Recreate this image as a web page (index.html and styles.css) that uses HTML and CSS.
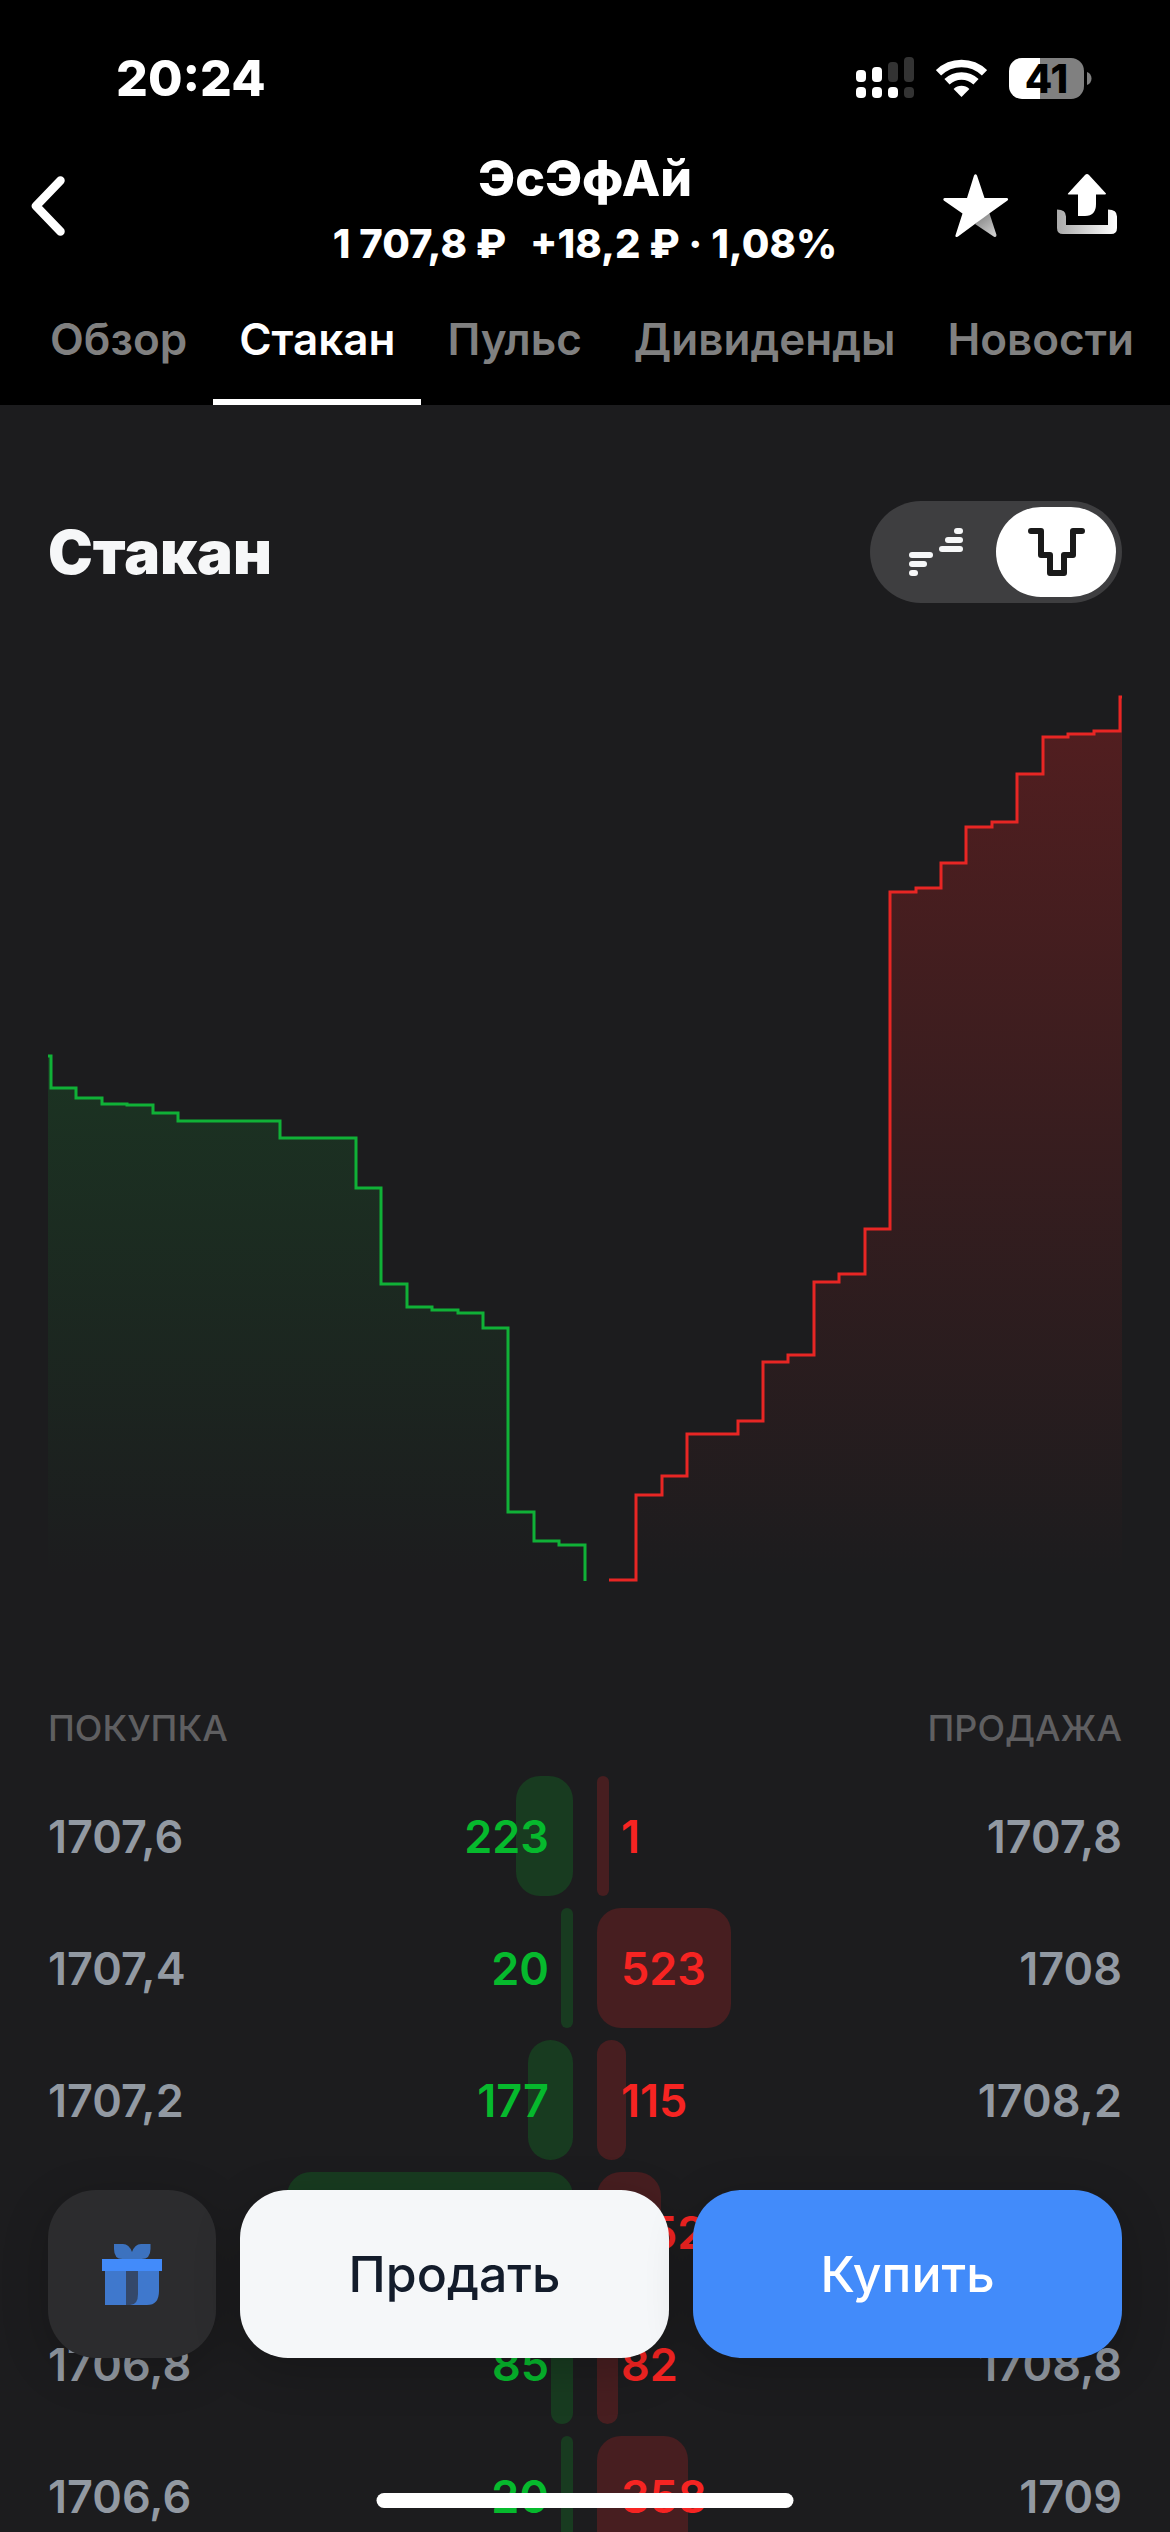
FILE: index.html
```html
<!DOCTYPE html>
<html lang="ru">
<head>
<meta charset="UTF-8">
<meta name="viewport" content="width=device-width, initial-scale=1.0">
<title>ЭсЭфАй — Стакан</title>
<link rel="stylesheet" href="styles.css">
</head>
<body>
<div class="app">
  <header class="header">
    <div class="status-bar">
      <span class="time">20:24</span>
      <div class="status-icons">
        <svg class="signal" width="58" height="42" viewBox="0 0 58 42" aria-hidden="true">
          <g fill="#fff">
            <rect x="0" y="13" width="10" height="12" rx="4"/>
            <rect x="16" y="10" width="10" height="15" rx="4"/>
            <rect x="0" y="30" width="10" height="11" rx="4"/>
            <rect x="16" y="30" width="10" height="11" rx="4"/>
            <rect x="32" y="30" width="10" height="11" rx="4"/>
          </g>
          <g fill="#333">
            <rect x="32" y="5" width="10" height="20" rx="4"/>
            <rect x="48" y="0" width="10" height="25" rx="4"/>
            <rect x="48" y="30" width="10" height="11" rx="4"/>
          </g>
        </svg>
        <svg class="wifi" width="51" height="38" viewBox="0 0 51 38" aria-hidden="true">
          <g fill="none" stroke="#fff" stroke-width="7.5">
            <path d="M2.5 13.8a33 33 0 0 1 46 0"/>
            <path d="M11 22.8a21 21 0 0 1 29 0"/>
          </g>
          <path fill="#fff" d="M17.6 30a11.5 11.5 0 0 1 15.8 0L25.5 38z"/>
        </svg>
        <div class="battery">
          <span class="battery-level">41</span>
          <svg width="5" height="13" viewBox="0 0 5 13" aria-hidden="true"><path fill="#808080" d="M0 0c6 2 6 11 0 13z"/></svg>
        </div>
      </div>
    </div>

    <div class="nav">
      <a href="#" class="back" aria-label="Назад">
        <svg width="34" height="60" viewBox="0 0 34 60"><path d="M29.500 4.500L5 30l24.500 25.500" fill="none" stroke="#fff" stroke-width="8.500" stroke-linecap="round" stroke-linejoin="round"/></svg>
      </a>
      <div class="instrument">
        <h1>ЭсЭфАй</h1>
        <p><span>1&nbsp;707,8&nbsp;₽</span><span>+18,2&nbsp;₽ · 1,08%</span></p>
      </div>
      <div class="nav-actions">
        <button type="button" aria-label="В избранное">
          <svg width="66" height="64" viewBox="0 0 66 64">
            <defs><linearGradient id="starFold" x1="0" y1="0" x2="0.700" y2="1"><stop offset="0.200" stop-color="#888"/><stop offset="1" stop-color="#ccc"/></linearGradient></defs>
            <path fill="url(#starFold)" d="M32 50L46 38l7.500 23q0 2.500-2.500 1.700z"/>
            <path fill="#fff" d="M31 1.500q1.500-2.500 3 0L41.500 24H64q2 1 .5 2.500L45.500 40 15 62.400q-3 1.500-2.500-1.200L19.500 39.500.8 26.500Q-.5 24.500 1.600 24H24z"/>
          </svg>
        </button>
        <button type="button" aria-label="Поделиться">
          <svg width="60" height="62" viewBox="0 0 60 62">
            <defs><linearGradient id="tray" x1="0" y1="0" x2="1" y2="0"><stop offset="0" stop-color="#aaa"/><stop offset="1" stop-color="#fff"/></linearGradient></defs>
            <path fill="url(#tray)" d="M0 35.500q9 0 9 7V51h42V35.500q9 0 9 7V54q0 6-6 6H6q-6 0-6-6z"/>
            <path fill="#fff" d="M30 0q1 0 2 1l17 18.500q0 1-1 1h-9V30q0 12-11 12h-7V20.500h-9q-2 0-1-1L28 1q1-1 2-1z"/>
          </svg>
        </button>
      </div>
    </div>

    <nav class="tabs">
      <a href="#">Обзор</a>
      <a href="#" class="active">Стакан</a>
      <a href="#">Пульс</a>
      <a href="#">Дивиденды</a>
      <a href="#">Новости</a>
    </nav>
  </header>

  <main class="content">
    <div class="section-head">
      <h2>Стакан</h2>
      <div class="view-switch">
        <button type="button" aria-label="Список">
          <svg width="54" height="48" viewBox="0 0 54 48" fill="#f6f7f8">
            <rect x="45" y="0" width="9" height="6" rx="3"/>
            <rect x="36" y="9" width="18" height="6" rx="3"/>
            <rect x="30" y="18" width="24" height="6" rx="3"/>
            <rect x="0" y="24" width="24" height="6" rx="3"/>
            <rect x="0" y="33" width="18" height="6" rx="3"/>
            <rect x="0" y="42" width="9" height="6" rx="3"/>
          </svg>
        </button>
        <button type="button" class="selected" aria-label="График">
          <svg width="57" height="48" viewBox="0 0 57 48"><path d="M3 3h10v24h9v18h14V27h9V3h9" fill="none" stroke="#1a1a1a" stroke-width="6" stroke-linecap="round" stroke-linejoin="round"/></svg>
        </button>
      </div>
    </div>

    <svg class="depth-chart" viewBox="0 0 1074 888" aria-hidden="true">
      <defs>
        <linearGradient id="bidFill" x1="0" y1="360" x2="0" y2="884" gradientUnits="userSpaceOnUse">
          <stop offset="0" stop-color="#18b93c" stop-opacity="0.150"/>
          <stop offset="1" stop-color="#18b93c" stop-opacity="0"/>
        </linearGradient>
        <linearGradient id="askFill" x1="0" y1="0" x2="0" y2="884" gradientUnits="userSpaceOnUse">
          <stop offset="0" stop-color="#f02424" stop-opacity="0.260"/>
          <stop offset="1" stop-color="#f02424" stop-opacity="0"/>
        </linearGradient>
      </defs>
      <path fill="url(#bidFill)" d="M0 360H3V392H28V402H54V408H79V409H105V417H130V425H232V442H308V492H333V588H359V611H384V614H410V617H435V632H460V816H486V845H511V849H537V884H0z"/>
      <path class="line bid-line" d="M0 360H3V392H28V402H54V408H79V409H105V417H130V425H232V442H308V492H333V588H359V611H384V614H410V617H435V632H460V816H486V845H511V849H537V885"/>
      <path fill="url(#askFill)" d="M588 884V799H614V780H639V738H690V725H715V666H740V659H766V586H791V578H817V533H842V196H868V192H893V167H918V131H944V126H969V78H995V41H1020V38H1046V35H1072V1H1074V884z"/>
      <path class="line ask-line" d="M561 884H588V799H614V780H639V738H690V725H715V666H740V659H766V586H791V578H817V533H842V196H868V192H893V167H918V131H944V126H969V78H995V41H1020V38H1046V35H1072V1H1074"/>
    </svg>

    <table class="book">
      <colgroup>
        <col class="col-price">
        <col class="col-qty">
        <col class="col-qty">
        <col class="col-price">
      </colgroup>
      <thead>
        <tr>
          <th colspan="2" class="left">ПОКУПКА</th>
          <th colspan="2" class="right">ПРОДАЖА</th>
        </tr>
      </thead>
      <tbody>
        <tr>
          <td class="left">1707,6</td>
          <td><div class="qty bid"><span class="bar" style="width: 57px"></span><span class="num">223</span></div></td>
          <td><div class="qty ask"><span class="bar" style="width: 12px"></span><span class="num">1</span></div></td>
          <td class="right">1707,8</td>
        </tr>
        <tr>
          <td class="left">1707,4</td>
          <td><div class="qty bid"><span class="bar" style="width: 12px"></span><span class="num">20</span></div></td>
          <td><div class="qty ask"><span class="bar" style="width: 134px"></span><span class="num">523</span></div></td>
          <td class="right">1708</td>
        </tr>
        <tr>
          <td class="left">1707,2</td>
          <td><div class="qty bid"><span class="bar" style="width: 45px"></span><span class="num">177</span></div></td>
          <td><div class="qty ask"><span class="bar" style="width: 29px"></span><span class="num">115</span></div></td>
          <td class="right">1708,2</td>
        </tr>
        <tr>
          <td class="left"></td>
          <td><div class="qty bid"><span class="bar" style="width: 286px"></span></div></td>
          <td><div class="qty ask"><span class="bar" style="width: 64px"></span><span class="num">252</span></div></td>
          <td class="right"></td>
        </tr>
        <tr>
          <td class="left">1706,8</td>
          <td><div class="qty bid"><span class="bar" style="width: 22px"></span><span class="num">85</span></div></td>
          <td><div class="qty ask"><span class="bar" style="width: 21px"></span><span class="num">82</span></div></td>
          <td class="right">1708,8</td>
        </tr>
        <tr>
          <td class="left">1706,6</td>
          <td><div class="qty bid"><span class="bar" style="width: 12px"></span><span class="num">20</span></div></td>
          <td><div class="qty ask"><span class="bar" style="width: 91px"></span><span class="num">358</span></div></td>
          <td class="right">1709</td>
        </tr>
      </tbody>
    </table>
  </main>

  <div class="trade-bar">
    <button type="button" class="gift" aria-label="Подарок">
      <svg width="60" height="61" viewBox="0 0 60 61">
        <path fill="#3c72bf" d="M12 0h9q6 0 9 8 3-8 9-8h9.500v5q0 10-9 10h-19Q12 15 12 5z"/>
        <path fill="#3f78cd" d="M3 27h54v20q0 14-12 14H3z"/>
        <path fill="#34486a" d="M24 27h12v23q0 11-8 11h-4z"/>
        <path fill="#428bfa" d="M0 15h60v12H0z"/>
      </svg>
    </button>
    <button type="button" class="sell">Продать</button>
    <button type="button" class="buy">Купить</button>
  </div>
  <div class="home-indicator"></div>
</div>
</body>
</html>
```

FILE: styles.css
```css
* {
  box-sizing: border-box;
}

body {
  margin: 0;
  background-color: #1c1c1e;
  color: #fff;
  font-family: Inter, "Noto Sans", sans-serif;
}

h1, h2, p {
  margin: 0;
}

button {
  padding: 0;
  border: none;
  background: none;
  color: inherit;
  font-family: inherit;
  cursor: pointer;
}

svg {
  display: block;
}

.app {
  height: 100vh;
  overflow: hidden;
}

.header {
  background-color: #000;
}

/* status bar */
.status-bar {
  display: flex;
  justify-content: space-between;
  align-items: center;
  padding: 48px 78px 0 116px;
  line-height: 60px;
}

.time {
  font-size: 50px;
  font-weight: 800;
}

.status-icons {
  display: flex;
  align-items: center;
  gap: 22px;
}

.battery {
  display: flex;
  align-items: center;
  gap: 3px;
}

.battery-level {
  width: 75px;
  height: 41px;
  border-radius: 13px;
  background: linear-gradient(90deg, #fff 41%, #808080 41%);
  color: #000;
  font-size: 40px;
  font-weight: 800;
  line-height: 41px;
  text-align: center;
}

/* title row */
.nav {
  display: grid;
  grid-template-columns: 1fr auto 1fr;
  padding: 40px 31px 0;
}

.back {
  justify-self: start;
  margin-top: 28px;
}

.instrument {
  display: flex;
  flex-direction: column;
  gap: 6px;
  line-height: 60px;
  text-align: center;
  white-space: nowrap;
}

.instrument h1 {
  font-size: 50px;
  font-weight: 800;
}

.instrument p {
  display: flex;
  gap: 24px;
  font-size: 40px;
  font-weight: 800;
}

.nav-actions {
  display: flex;
  justify-content: flex-end;
  align-items: flex-start;
  gap: 48px;
  margin-top: 26px;
  margin-right: 22px;
}

/* tabs */
.tabs {
  display: flex;
  padding-left: 24px;
  overflow: hidden;
}

.tabs a {
  padding: 41px 26px 36px;
  border-bottom: 6px solid transparent;
  color: #808080;
  font-size: 44px;
  font-weight: 600;
  line-height: 48px;
  text-decoration: none;
}

.tabs .active {
  border-color: #fff;
  color: #fff;
}

/* content */
.content {
  padding: 96px 48px 0;
}

.section-head {
  display: flex;
  justify-content: space-between;
  align-items: center;
  margin-bottom: 93px;
}

.section-head h2 {
  color: #f6f7f8;
  font-size: 60px;
  font-weight: 900;
}

.view-switch {
  display: flex;
  padding: 6px;
  border-radius: 51px;
  background-color: #3e3e40;
}

.view-switch button {
  display: flex;
  justify-content: center;
  align-items: center;
  width: 120px;
  height: 90px;
  border-radius: 45px;
}

.view-switch .selected {
  background-color: #fff;
}

.depth-chart {
  width: 100%;
  overflow: visible;
}

.line {
  fill: none;
  stroke-width: 3;
}

.bid-line {
  stroke: #10b137;
}

.ask-line {
  stroke: #e82624;
}

/* order book */
.book {
  width: 100%;
  margin-top: 120px;
  border-collapse: collapse;
  table-layout: fixed;
  color: #9299a2;
  font-size: 45px;
  font-weight: 600;
}

.col-price {
  width: 22%;
}

.col-qty {
  width: 28%;
}

.book th {
  padding: 0 0 18px;
  color: #5f5f61;
  font-size: 36px;
  font-weight: 500;
  line-height: 48px;
}

.book td {
  padding: 6px 0;
}

.book .left {
  text-align: left;
}

.book .right {
  text-align: right;
}

/* the bar and the number share one grid cell */
.qty {
  display: grid;
  align-items: center;
  height: 120px;
}

.bar,
.num {
  grid-area: 1 / 1;
}

.bar {
  height: 120px;
  border-radius: 24px;
}

.num {
  padding: 0 24px;
}

.bid {
  justify-items: end;
  margin-right: 12px;
  color: #06b92d;
}

.bid .bar {
  background-color: #183b20;
}

.ask {
  justify-items: start;
  margin-left: 12px;
  color: #f62422;
}

.ask .bar {
  background-color: #471e20;
}

/* bottom buttons */
.trade-bar {
  position: fixed;
  right: 48px;
  bottom: 174px;
  left: 48px;
  display: grid;
  grid-template-columns: 168px 1fr 1fr;
  gap: 24px;
}

.trade-bar button {
  display: flex;
  justify-content: center;
  align-items: center;
  height: 168px;
  border-radius: 48px;
  box-shadow: 0 12px 48px rgba(0, 0, 0, 0.2);
  font-size: 50px;
  font-weight: 500;
}

.trade-bar .gift {
  background-color: #2c2c2e;
}

.trade-bar .sell {
  background-color: #f5f7f9;
  color: #131c2b;
}

.trade-bar .buy {
  background-color: #428bfa;
  color: #fff;
}

.home-indicator {
  position: fixed;
  bottom: 24px;
  left: 50%;
  width: 417px;
  height: 15px;
  border-radius: 8px;
  background-color: #fff;
  transform: translateX(-50%);
}
```
